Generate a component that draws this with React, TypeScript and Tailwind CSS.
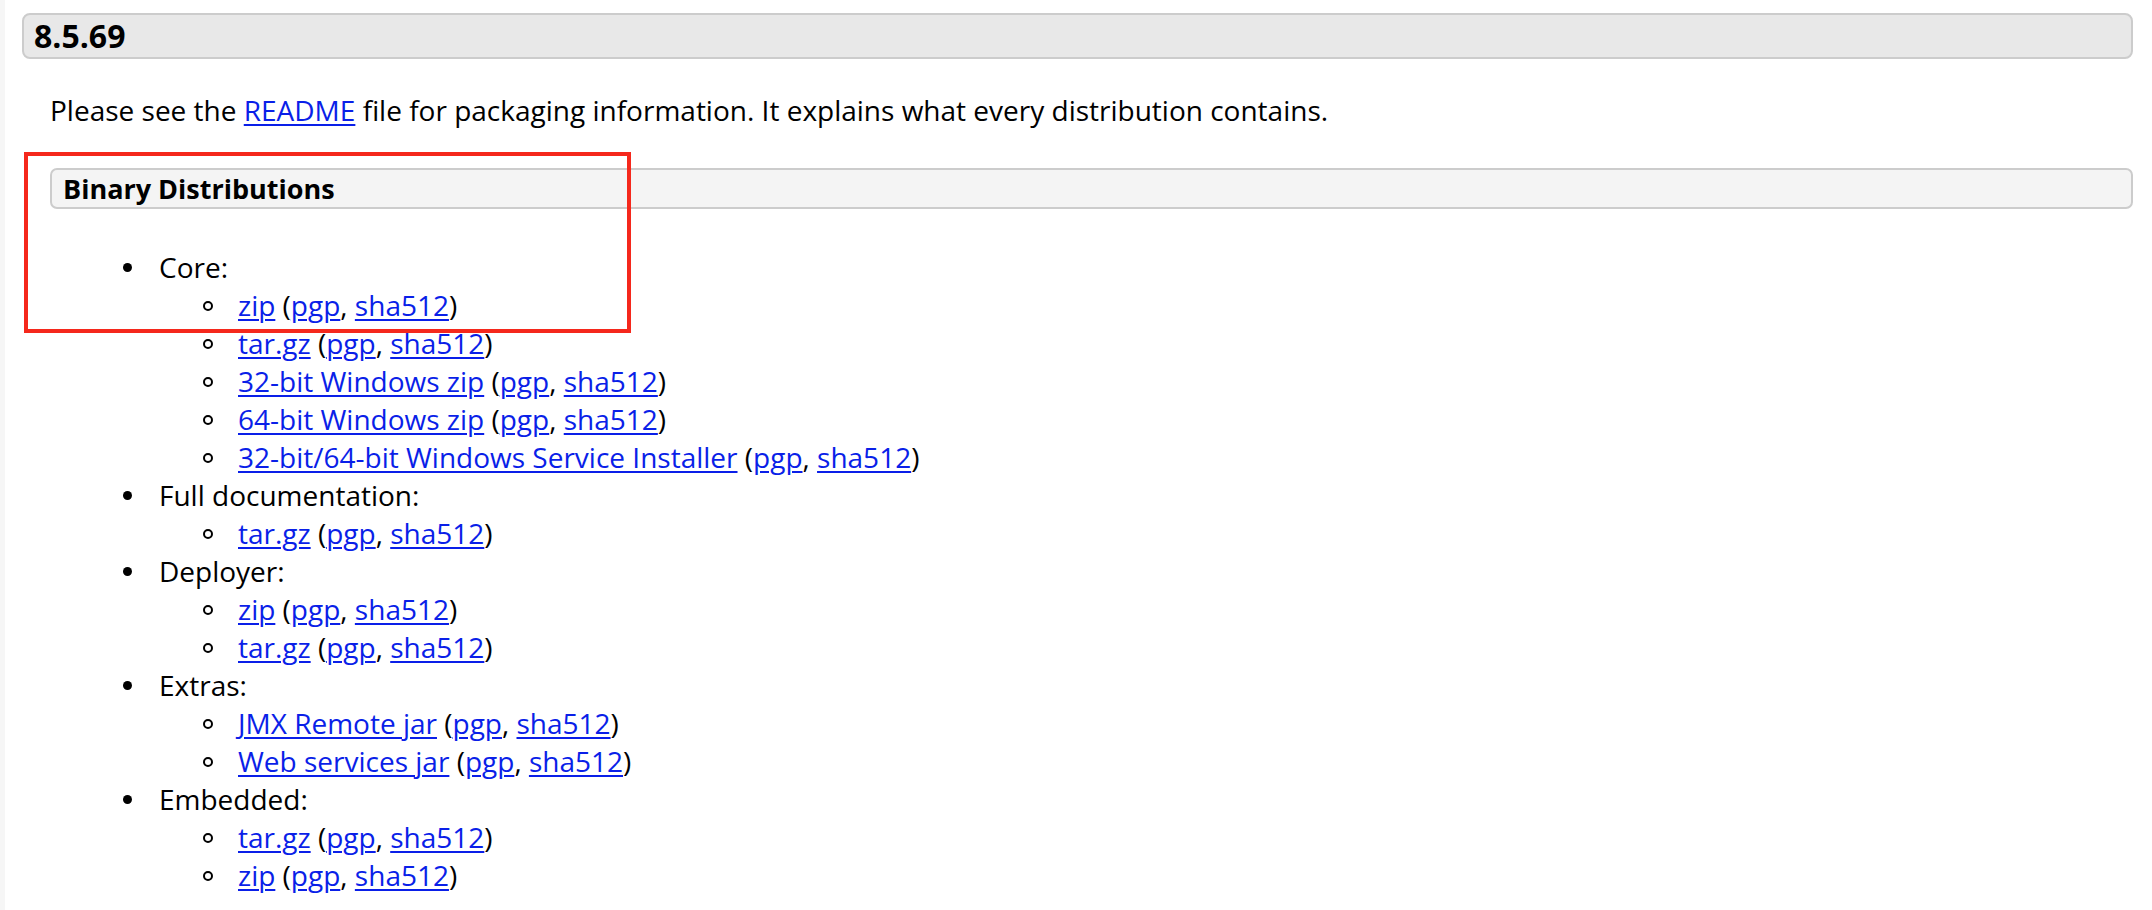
import React from 'react'

type Link = { label: string }
type Group = { title: string; items: string[] }

const groups: Group[] = [
  { title: 'Core:', items: ['zip', 'tar.gz', '32-bit Windows zip', '64-bit Windows zip', '32-bit/64-bit Windows Service Installer'] },
  { title: 'Full documentation:', items: ['tar.gz'] },
  { title: 'Deployer:', items: ['zip', 'tar.gz'] },
  { title: 'Extras:', items: ['JMX Remote jar', 'Web services jar'] },
  { title: 'Embedded:', items: ['tar.gz', 'zip'] },
]

const linkCls = 'text-[#0a1fe8] underline underline-offset-[3px] decoration-[2px]'

function DownloadItem({ label }: Link) {
  return (
    <li>
      <span className="-ml-[35px] mr-[25px] inline-block size-[10px] rounded-full border-2 border-black align-[5px]" />
      <a href="#" className={linkCls}>{label}</a> (<a href="#" className={linkCls}>pgp</a>, <a href="#" className={linkCls}>sha512</a>)
    </li>
  )
}

export default function App() {
  return (
    <div className="flex min-h-screen bg-white text-black" style={{ fontFamily: '"Open Sans", "Liberation Sans", sans-serif' }}>
      <div className="w-[5px] shrink-0 bg-[#f6f6f6]" />
      <main className="relative flex-1 pl-[17px] pr-[19px] pt-[13px]">
        <div className="flex h-[46px] items-center rounded-[8px] border-2 border-[#cccccc] bg-[#e8e8e8] pl-[10px]">
          <h3 className="text-[32px] font-bold leading-none">8.5.69</h3>
        </div>

        <div className="ml-[28px] text-[28px] leading-[38px]">
          <p className="mt-[32px]">
            Please see the <a href="#" className={linkCls}>README</a> file for packaging information. It explains what every distribution contains.
          </p>

          <div className="mt-[39px] flex h-[41px] items-center rounded-[7px] border-2 border-[#cccccc] bg-[#f4f4f4] pl-[11px]">
            <h4 className="text-[27px] font-bold leading-none">Binary Distributions</h4>
          </div>

          <ul className="mt-[39px] list-none pl-[109px]">
            {groups.map((g) => (
              <li key={g.title}>
                <span className="-ml-[36px] mr-[27px] inline-block size-[9px] rounded-full bg-black align-[6px]" />
                {g.title}
                <ul className="list-none pl-[79px]">
                  {g.items.map((it, i) => (
                    <DownloadItem key={g.title + i} label={it} />
                  ))}
                </ul>
              </li>
            ))}
          </ul>
        </div>

        {/* highlight marker drawn over the section */}
        <div className="pointer-events-none absolute left-[19px] top-[152px] h-[181px] w-[607px] border-4 border-[#f5281c]" />
      </main>
    </div>
  )
}
